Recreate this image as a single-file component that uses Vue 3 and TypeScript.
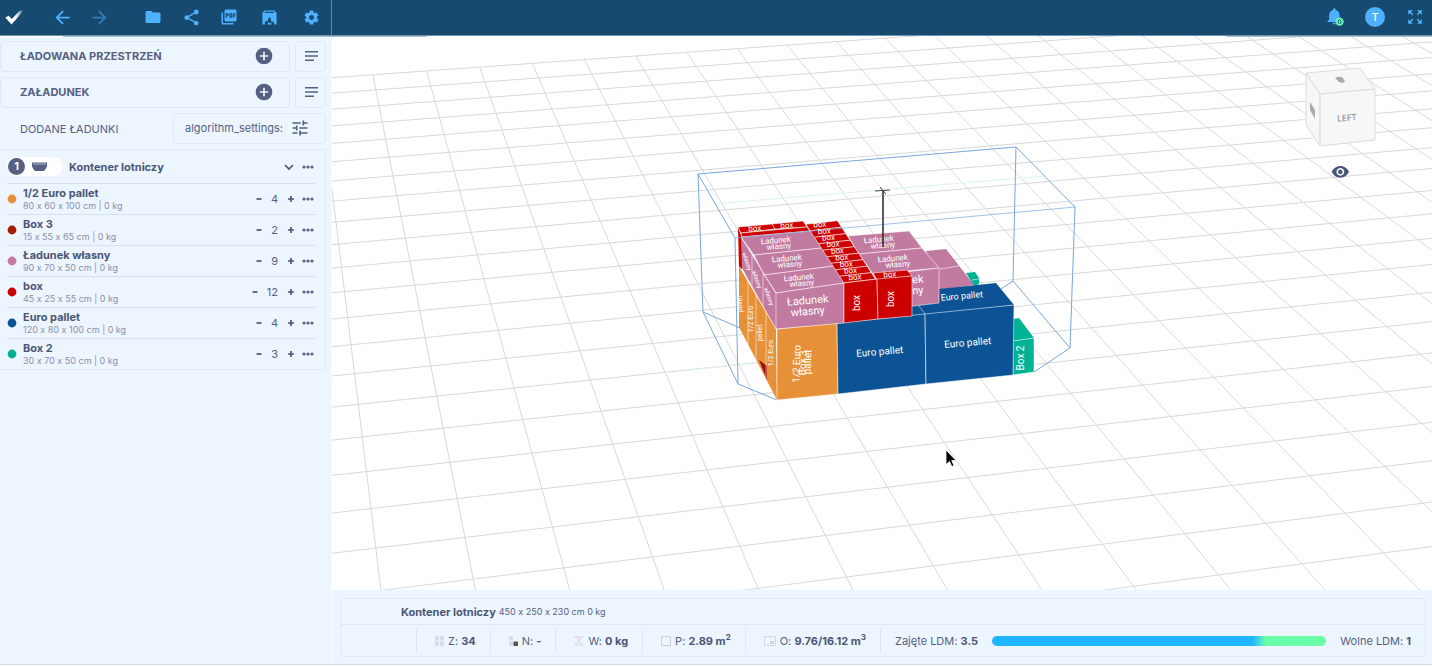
<script setup lang="ts">
interface Cargo {
  name: string
  size: string
  count: number
  color: string
}

interface Face {
  points: string
  fill: string
  edge?: boolean
}

interface Label {
  text: string
  x: number
  y: number
  angle: number
  size: number
}

interface Segment {
  x1: number
  y1: number
  x2: number
  y2: number
}

const cargo: Cargo[] = [
  { name: '1/2 Euro pallet', size: '80 x 60 x 100 cm | 0 kg', count: 4, color: '#e69138' },
  { name: 'Box 3', size: '15 x 55 x 65 cm | 0 kg', count: 2, color: '#a61c00' },
  { name: 'Ładunek własny', size: '90 x 70 x 50 cm | 0 kg', count: 9, color: '#c27ba0' },
  { name: 'box', size: '45 x 25 x 55 cm | 0 kg', count: 12, color: '#cc0000' },
  { name: 'Euro pallet', size: '120 x 80 x 100 cm | 0 kg', count: 4, color: '#0b5394' },
  { name: 'Box 2', size: '30 x 70 x 50 cm | 0 kg', count: 3, color: '#00b294' },
]

// Floor grid in perspective: both line families meet on a common horizon.
const horizon = -638
const vanishX = 231
const farX = 10334
const left = 332
const right = 1432
const bottom = 592

const rowY = (j: number, x: number): number => {
  const depth = 1 / (0.00139723 - 0.000029358 * j)
  return horizon + (depth * (farX - x)) / (farX - left)
}

const rows: Segment[] = Array.from({ length: 24 }, (_, j) => ({
  x1: left,
  y1: rowY(j, left),
  x2: right,
  y2: rowY(j, right),
}))

const columns: Segment[] = Array.from({ length: 22 }, (_, i) => {
  const slope = 0.199 + 0.07689 * (i - 1)
  const backSlope = (rowY(0, right) - rowY(0, left)) / (right - left)
  const back0 = rowY(0, left) - backSlope * left
  const y1 = (back0 + backSlope * (vanishX - slope * horizon)) / (1 - backSlope * slope)
  return {
    x1: vanishX + slope * (y1 - horizon),
    y1,
    x2: vanishX + slope * (bottom - horizon),
    y2: bottom,
  }
})

const orange = '#e69138'
const pink = '#c27ba0'
const red = '#cc0000'
const blue = '#0b5394'
const green = '#00b294'

const redColumn: Face[] = Array.from({ length: 9 }, (_, i) => {
  const lx = 806 + 4.2 * i
  const ly = 224.3 + 6.5 * i
  const rx = 837.3 + 4.25 * i
  const ry = 220.7 + 6.5 * i
  return {
    points: `${lx},${ly} ${rx},${ry} ${rx + 4.25},${ry + 6.5} ${lx + 4.2},${ly + 6.5}`,
    fill: red,
    edge: true,
  }
})

const faces: Face[] = [
  { points: '966,273 975,272 979,278 979,284 974,286', fill: green },
  { points: '926,251 946,249 974,285 938,290', fill: pink },
  { points: '848,236 909,231 922,248 859,254', fill: pink, edge: true },
  { points: '859,254 922,248 939,268 873,274', fill: pink, edge: true },
  { points: '905,306 939,302 939,289 996,283 1014,305 925,315 905,317', fill: blue },
  { points: '905,272 939,268 939,303 905,307', fill: pink, edge: true },
  { points: '1013,319 1019,318 1034,338 1013,341', fill: green },
  { points: '1013,341 1034,338 1034,372 1013,375', fill: green, edge: true },
  { points: '739,266 776,329 777,400 739,327', fill: orange },
  { points: '777,329 837,323 838,394 777,400', fill: orange, edge: true },
  { points: '837,323 925,314 926,384 838,394', fill: blue, edge: true },
  { points: '925,314 1014,305 1013,375 926,384', fill: blue, edge: true },
  { points: '738,227 742,238 742,269 739,267', fill: red },
  { points: '738,227 772,224 775,229 741,233', fill: red, edge: true },
  { points: '772,224 803,221 807,227 775,229', fill: red, edge: true },
  { points: '741,233 807,227 810,231 742,237', fill: red, edge: true },
  { points: '741,237 776,293 776,329 742,268', fill: pink },
  { points: '741,237 811,231 822,248 754,255', fill: pink, edge: true },
  { points: '754,255 822,248 834,266 764,275', fill: pink, edge: true },
  { points: '764,275 834,266 845,283 776,293', fill: pink, edge: true },
  { points: '776,293 844,283 844,323 776,329', fill: pink, edge: true },
  ...redColumn,
  { points: '873,273 907,270 912,276 877,280', fill: red, edge: true },
  { points: '844,283 877,279 878,319 844,323', fill: red, edge: true },
  { points: '877,279 912,276 912,316 878,319', fill: red, edge: true },
]

const seams: Segment[] = [
  { x1: 748, y1: 281, x2: 748, y2: 345 },
  { x1: 756, y1: 295, x2: 756, y2: 361 },
  { x1: 766, y1: 311, x2: 766, y2: 378 },
  { x1: 752, y1: 255, x2: 752, y2: 287 },
  { x1: 763, y1: 273, x2: 763, y2: 306 },
  { x1: 741, y1: 237, x2: 776, y2: 293 },
  { x1: 739, y1: 266, x2: 776, y2: 329 },
  { x1: 940, y1: 269, x2: 959, y2: 266 },
  { x1: 919, y1: 306, x2: 925, y2: 314 },
  { x1: 972, y1: 280, x2: 979, y2: 279 },
]

const labels: Label[] = [
  { text: 'Ładunek', x: 808, y: 304, angle: -5, size: 11 },
  { text: 'własny', x: 808, y: 315, angle: -5, size: 11 },
  { text: 'Euro pallet', x: 880, y: 355, angle: -5, size: 10 },
  { text: 'Euro pallet', x: 968, y: 346, angle: -5, size: 10 },
  { text: '1/2 Euro', x: 800, y: 364, angle: -88, size: 10 },
  { text: 'Box 3', x: 806, y: 363, angle: -88, size: 10 },
  { text: 'pallet', x: 811, y: 362, angle: -88, size: 10 },
  { text: 'box', x: 860, y: 303, angle: -90, size: 10 },
  { text: 'box', x: 894, y: 299, angle: -90, size: 10 },
  { text: 'Box 2', x: 1024, y: 358, angle: -90, size: 10 },
  { text: 'ek', x: 918, y: 283, angle: -5, size: 11 },
  { text: 'ny', x: 918, y: 294, angle: -5, size: 11 },
  { text: 'Euro pallet', x: 962, y: 299, angle: -5, size: 9 },
  { text: 'box', x: 755, y: 231, angle: -5, size: 8 },
  { text: 'box', x: 787, y: 228, angle: -5, size: 8 },
  { text: 'box', x: 890, y: 277, angle: -5, size: 8 },
  { text: 'Ładunek', x: 776, y: 243, angle: -5, size: 8 },
  { text: 'własny', x: 779, y: 249, angle: -5, size: 8 },
  { text: 'Ładunek', x: 787, y: 261, angle: -5, size: 8 },
  { text: 'własny', x: 790, y: 267, angle: -5, size: 8 },
  { text: 'Ładunek', x: 799, y: 280, angle: -5, size: 8 },
  { text: 'własny', x: 802, y: 286, angle: -5, size: 8 },
  { text: 'Ładunek', x: 879, y: 242, angle: -5, size: 8 },
  { text: 'własny', x: 883, y: 248, angle: -5, size: 8 },
  { text: 'Ładunek', x: 893, y: 261, angle: -5, size: 8 },
  { text: 'własny', x: 898, y: 267, angle: -5, size: 8 },
  { text: 'pallet', x: 742, y: 304, angle: -90, size: 7 },
  { text: '1/2 Euro', x: 753, y: 319, angle: -90, size: 7 },
  { text: 'pallet', x: 762, y: 333, angle: -90, size: 7 },
  { text: '1/2 Euro', x: 773, y: 353, angle: -90, size: 7 },
  { text: 'własny', x: 745, y: 262, angle: 72, size: 6 },
  { text: 'własny', x: 755, y: 280, angle: 72, size: 6 },
  { text: 'własny', x: 767, y: 297, angle: 72, size: 6 },
  ...Array.from({ length: 9 }, (_, i) => ({
    text: 'box',
    x: 820 + 4.4 * i,
    y: 227 + 6.6 * i,
    angle: -5,
    size: 8,
  })),
]
</script>

<template>
  <div class="page">
    <header class="topbar">
      <div class="tools">
        <svg class="logo" viewBox="0 0 24 24" width="20" height="20">
          <defs>
            <linearGradient id="tick" x1="0" x2="1">
              <stop offset="0.6" stop-color="#fff" />
              <stop offset="1" stop-color="#fff" stop-opacity="0.2" />
            </linearGradient>
          </defs>
          <path d="M1.500 12.500l4-2 4 4L18 5l4.500-1-1 3-12.500 14z" fill="url(#tick)" />
        </svg>
        <div class="group history">
          <button type="button" aria-label="Cofnij">
            <svg viewBox="0 0 24 24" width="21" height="21"><path d="M20 11H7.830l5.590-5.590L12 4l-8 8 8 8 1.410-1.410L7.830 13H20v-2z" /></svg>
          </button>
          <button type="button" class="dim" aria-label="Ponów">
            <svg viewBox="0 0 24 24" width="21" height="21"><path d="M12 4l-1.410 1.410L16.170 11H4v2h12.170l-5.580 5.590L12 20l8-8z" /></svg>
          </button>
        </div>
        <div class="group files">
          <button type="button" aria-label="Otwórz">
            <svg viewBox="0 0 24 24" width="18" height="18"><path d="M10 4H4c-1.100 0-2 .9-2 2v12c0 1.100.9 2 2 2h16c1.100 0 2-.9 2-2V8c0-1.100-.9-2-2-2h-8l-2-2z" /></svg>
          </button>
          <button type="button" aria-label="Udostępnij">
            <svg viewBox="0 0 24 24" width="19" height="19"><path d="M18 16.080c-.76 0-1.440.3-1.960.77L8.910 12.700c.05-.23.09-.46.09-.7s-.04-.47-.09-.7l7.050-4.110c.54.5 1.250.81 2.040.81 1.660 0 3-1.340 3-3s-1.340-3-3-3-3 1.340-3 3c0 .24.04.47.09.7L8.040 9.810C7.500 9.310 6.790 9 6 9c-1.660 0-3 1.340-3 3s1.340 3 3 3c.79 0 1.500-.31 2.040-.81l7.120 4.160c-.05.21-.08.43-.08.65 0 1.610 1.310 2.920 2.920 2.920s2.920-1.310 2.920-2.920-1.310-2.920-2.920-2.920z" /></svg>
          </button>
          <button type="button" aria-label="PDF">
            <svg viewBox="0 0 24 24" width="18" height="18"><path d="M20 2H8c-1.100 0-2 .9-2 2v12c0 1.100.9 2 2 2h12c1.100 0 2-.9 2-2V4c0-1.100-.9-2-2-2zm-8.500 7.500c0 .83-.67 1.500-1.500 1.500H9v2H7.500V7H10c.83 0 1.500.67 1.500 1.500v1zm5 2c0 .83-.67 1.500-1.500 1.500h-2.500V7H15c.83 0 1.500.67 1.500 1.500v3zm4-3H19v1h1.500V11H19v2h-1.500V7h3v1.500zM9 9.500h1v-1H9v1zM4 6H2v14c0 1.100.9 2 2 2h14v-2H4V6zm10 5.500h1v-3h-1v3z" /></svg>
          </button>
        </div>
        <div class="group extras">
          <button type="button" aria-label="Obraz">
            <svg viewBox="0 0 24 24" width="17" height="17">
              <path fill-rule="evenodd" d="M5 2h14l3 3.500V22H2V5.500zM5.500 4v1.500h13V4zM5.500 22h13v-3l-2-1.500-1.500 1-2-6.500h-2l-2 5.500-2-1-1.500 2z" />
              <path d="M8.500 22l2.500-3.500 1.500 1.500 1.500-1 1.500 3z" />
            </svg>
          </button>
          <button type="button" aria-label="Ustawienia">
            <svg viewBox="0 0 24 24" width="17" height="17"><path d="M19.430 12.980c.04-.32.07-.64.07-.98s-.03-.66-.07-.98l2.110-1.650c.19-.15.24-.42.12-.64l-2-3.460c-.12-.22-.39-.3-.61-.22l-2.490 1c-.52-.4-1.080-.73-1.690-.98l-.38-2.650C14.460 2.180 14.250 2 14 2h-4c-.25 0-.46.18-.49.42l-.38 2.650c-.61.25-1.170.59-1.690.98l-2.490-1c-.23-.09-.49 0-.61.22l-2 3.460c-.13.22-.07.49.12.64l2.110 1.650c-.04.32-.07.65-.07.98s.03.66.07.98l-2.110 1.650c-.19.15-.24.42-.12.64l2 3.460c.12.22.39.3.61.22l2.490-1c.52.4 1.080.73 1.690.98l.38 2.650c.03.24.24.42.49.42h4c.25 0 .46-.18.49-.42l.38-2.650c.61-.25 1.170-.59 1.690-.98l2.490 1c.23.09.49 0 .61-.22l2-3.460c.12-.22.07-.49-.12-.64l-2.110-1.650zM12 15.500c-1.930 0-3.500-1.570-3.500-3.500s1.570-3.500 3.500-3.500 3.500 1.570 3.500 3.500-1.570 3.500-3.500 3.500z" /></svg>
          </button>
        </div>
      </div>
      <div class="account">
        <button type="button" aria-label="Powiadomienia">
          <svg viewBox="0 0 24 24" width="20" height="20">
            <path d="M11 21c1 0 2-1 2-2H9c0 1 1 2 2 2zm6.500-6V10c0-3.100-1.700-5.600-4.800-6.300V3c0-.8-.7-1.500-1.500-1.500S9.700 2.200 9.700 3v.7C6.600 4.400 5 6.900 5 10v5l-2 2v1h16.500v-1z" />
            <circle cx="17.500" cy="17.500" r="5" fill="#69f0ae" />
            <ellipse cx="17.500" cy="17.500" rx="1.600" ry="2.300" fill="none" stroke="#174a70" stroke-width="1" />
          </svg>
        </button>
        <button type="button" class="avatar">T</button>
        <button type="button" aria-label="Pełny ekran">
          <svg viewBox="0 0 24 24" width="18" height="18"><path d="M15 3l2.300 2.300-2.890 2.870 1.420 1.420L18.700 6.700 21 9V3zM3 9l2.300-2.300 2.870 2.890 1.420-1.420L6.700 5.300 9 3H3zm6 12l-2.300-2.300 2.890-2.870-1.420-1.420L5.300 17.300 3 15v6zm12-6l-2.300 2.300-2.870-2.890-1.420 1.420 2.890 2.870L15 21h6z" /></svg>
        </button>
      </div>
    </header>

    <div class="body">
      <aside class="sidebar">
        <div class="section">
          <button type="button" class="card wide">
            <span>ŁADOWANA PRZESTRZEŃ</span>
            <svg viewBox="0 0 24 24" width="20" height="20"><path d="M12 2a10 10 0 100 20 10 10 0 000-20zm5 11h-4v4h-2v-4H7v-2h4V7h2v4h4z" /></svg>
          </button>
          <button type="button" class="card square" aria-label="Lista przestrzeni">
            <svg viewBox="0 0 14 12" width="14" height="12"><path d="M1 1h13v1.500H1zM1 5.300h13v1.500H1zM1 9.500h9V11H1z" /></svg>
          </button>
        </div>
        <div class="section">
          <button type="button" class="card wide">
            <span>ZAŁADUNEK</span>
            <svg viewBox="0 0 24 24" width="20" height="20"><path d="M12 2a10 10 0 100 20 10 10 0 000-20zm5 11h-4v4h-2v-4H7v-2h4V7h2v4h4z" /></svg>
          </button>
          <button type="button" class="card square" aria-label="Lista ładunków">
            <svg viewBox="0 0 14 12" width="14" height="12"><path d="M1 1h13v1.500H1zM1 5.300h13v1.500H1zM1 9.500h9V11H1z" /></svg>
          </button>
        </div>
        <div class="section added">
          <h2>DODANE ŁADUNKI</h2>
          <button type="button" class="card algorithm">
            <span>algorithm_settings:</span>
            <svg viewBox="0 0 24 24" width="20" height="20"><path d="M3 17v2h6v-2H3zM3 5v2h10V5H3zm10 16v-2h8v-2h-8v-2h-2v6h2zM7 9v2H3v2h4v2h2V9H7zm14 4v-2H11v2h10zm-6-4h2V7h4V5h-4V3h-2v6z" /></svg>
          </button>
        </div>

        <section class="manifest">
          <div class="manifest-head">
            <span class="pill">
              <span class="number">1</span>
              <svg viewBox="0 0 15 10" width="15" height="10"><path d="M0 .5h15v4L13 8q-.5 1-2 1H4Q2.500 9 2 8L0 4.500z" /><path d="M1 2h13" stroke="#a9b5c9" stroke-width="1" /></svg>
            </span>
            <strong>Kontener lotniczy</strong>
            <button type="button" aria-label="Zwiń">
              <svg viewBox="0 0 10 8" width="10" height="8"><path d="M1 2l4 4 4-4" class="stroke" /></svg>
            </button>
            <button type="button" aria-label="Więcej">
              <svg viewBox="0 0 12 4" width="12" height="4"><circle cx="2" cy="2" r="1.600" /><circle cx="6" cy="2" r="1.600" /><circle cx="10" cy="2" r="1.600" /></svg>
            </button>
          </div>
          <ul>
            <li v-for="item in cargo" :key="item.name">
              <svg viewBox="0 0 10 10" width="10" height="10"><circle cx="5" cy="5" r="4.400" :fill="item.color" /></svg>
              <div class="details">
                <strong>{{ item.name }}</strong>
                <small>{{ item.size }}</small>
              </div>
              <div class="stepper">
                <button type="button" aria-label="Mniej">
                  <svg viewBox="0 0 6 8" width="6" height="8"><path d="M0.500 4h5" class="stroke" /></svg>
                </button>
                <span>{{ item.count }}</span>
                <button type="button" aria-label="Dodaj">
                  <svg viewBox="0 0 8 8" width="8" height="8"><path d="M1 4h6M4 1v6" class="stroke" /></svg>
                </button>
                <button type="button" aria-label="Więcej">
                  <svg viewBox="0 0 12 4" width="12" height="4"><circle cx="2" cy="2" r="1.600" /><circle cx="6" cy="2" r="1.600" /><circle cx="10" cy="2" r="1.600" /></svg>
                </button>
              </div>
            </li>
          </ul>
        </section>
      </aside>

      <main class="workspace">
        <svg class="scene" viewBox="332 36 1100 554" preserveAspectRatio="xMidYMid slice">
          <g class="grid">
            <line v-for="(l, i) in rows" :key="`r${i}`" v-bind="l" />
            <line v-for="(l, i) in columns" :key="`c${i}`" v-bind="l" />
          </g>
          <path d="M713 204L1045 176M682 371L753 363" stroke="#dcf7e0" />
          <path d="M860 162L908 222" stroke="#f5dde0" />
          <path class="wire" d="M698 174L1016 147L1075 207M698 174L703 312L738 384L777 400M703 312L740 328M1016 147L1013 281L1070 348L1075 207M1013 281L1001 289M1070 348L1034 372M698 174L735 238L738 384" />
          <polygon v-for="(f, i) in faces" :key="`f${i}`" :points="f.points" :fill="f.fill" :class="{ edge: f.edge }" />
          <path d="M759 360l8 6v14z" fill="#991100" />
          <line v-for="(l, i) in seams" :key="`s${i}`" v-bind="l" class="seam" />
          <path class="wire front" d="M735 238L1075 207" />
          <text
            v-for="(l, i) in labels"
            :key="`t${i}`"
            class="face-label"
            :font-size="l.size"
            :transform="`translate(${l.x} ${l.y}) rotate(${l.angle})`"
          >{{ l.text }}</text>
          <path d="M883 190V247" stroke="#333" stroke-width="1.600" />
          <path d="M875 191L890 190M880 187L886 194" stroke="#444" />
          <g class="cube">
            <polygon points="1306,73 1360,68 1375,89 1320,94" />
            <polygon points="1306,73 1320,94 1320,146 1306,125" />
            <polygon points="1320,94 1375,89 1375,140 1320,146" />
            <path d="M1335 78q4-2 7-1l3 4-2 2-4-1zM1310 102l5 8v9l-5-9z" class="smudge" />
            <text transform="translate(1347 121) rotate(-5)">LEFT</text>
          </g>
          <g transform="translate(1331 162.500) scale(0.780)">
            <path fill="#495678" d="M12 4.500C7 4.500 2.730 7.610 1 12c1.730 4.390 6 7.500 11 7.500s9.270-3.110 11-7.500c-1.730-4.390-6-7.500-11-7.500zM12 17c-2.760 0-5-2.240-5-5s2.240-5 5-5 5 2.240 5 5-2.240 5-5 5zm0-8c-1.660 0-3 1.340-3 3s1.340 3 3 3 3-1.340 3-3-1.340-3-3-3z" />
          </g>
          <path d="M946 450V464.500L949.500 461.500L951.800 466.500L954 465.500L951.700 460.500H956z" fill="#000" stroke="#fff" stroke-width="0.800" />
        </svg>

        <footer class="summary">
          <div class="summary-card">
            <div class="summary-title"><strong>Kontener lotniczy</strong><span>450 x 250 x 230 cm 0 kg</span></div>
            <div class="stats">
              <div class="stat">
                <svg viewBox="0 0 9 10" width="9" height="10"><path fill="#d8dce4" d="M0 0h4v4.500H0zM5 0h4v4.500H5zM0 5.500h4V10H0zM5 5.500h4V10H5z" /></svg>
                <span>Z: <b>34</b></span>
              </div>
              <div class="stat">
                <svg viewBox="0 0 9 10" width="9" height="10"><path fill="#d8dce4" d="M0 0h4v4.500H0zM0 5.500h4V10H0z" /><path fill="#555" d="M4.500 5.500H9V10H4.500z" /></svg>
                <span>N: <b>-</b></span>
              </div>
              <div class="stat">
                <svg viewBox="0 0 10 10" width="10" height="10"><path fill="none" stroke="#d3d8e0" d="M0 1h10M2 1l3 3 3-3M5 4L1 9h8L5 4M4 7h2" /></svg>
                <span>W: <b>0 kg</b></span>
              </div>
              <div class="stat">
                <svg viewBox="0 0 10 10" width="10" height="10"><path fill="none" stroke="#cdd2db" d="M.5.5h9v9h-9z" /></svg>
                <span>P: <b>2.89 m<sup>2</sup></b></span>
              </div>
              <div class="stat">
                <svg viewBox="0 0 12 10" width="12" height="10"><path fill="none" stroke="#d3d8e0" d="M.5.5h11v9H.5z" /><path fill="#cdd2db" d="M6 5h4v3H6z" /></svg>
                <span>O: <b>9.76/16.12 m<sup>3</sup></b></span>
              </div>
              <div class="stat ldm">
                <span>Zajęte LDM: <b>3.5</b></span>
                <div class="bar"></div>
                <span>Wolne LDM: <b>1</b></span>
              </div>
            </div>
          </div>
        </footer>
      </main>
    </div>
  </div>
</template>

<style>
body {
  margin: 0;
  background: #fff;
}
</style>

<style scoped>
.page {
  display: flex;
  flex-direction: column;
  box-sizing: border-box;
  height: 100vh;
  padding-bottom: 1px;
  font-family: Inter, "Open Sans", sans-serif;
  font-size: 11px;
  font-variant-ligatures: no-contextual;
  line-height: 14px;
  color: #566182;
}
button {
  display: flex;
  align-items: center;
  justify-content: center;
  padding: 0;
  border: 0;
  background: none;
  font: inherit;
  font-variant-ligatures: inherit;
  color: inherit;
  fill: currentColor;
}
svg {
  display: block;
  flex: none;
}
strong,
b {
  font-weight: 700;
  color: #4b5777;
}
.topbar {
  position: relative;
  display: flex;
  flex: none;
  justify-content: space-between;
  height: 35px;
  border-bottom: 1px solid #6f93ad;
  background: #174a70;
  color: #4db1ff;
}
.topbar::after {
  content: "";
  position: absolute;
  top: 36px;
  left: 0;
  right: 0;
  height: 1px;
  background: linear-gradient(90deg, #fff 63px, #a9bfd2 63px 427px, transparent 427px 1226px, #a9bfd2 1226px);
}
.tools {
  display: flex;
  align-items: center;
  box-sizing: border-box;
  width: 332px;
  padding: 0 8px 1px 4px;
  border-right: 1px solid #5d8aa9;
}
.tools button {
  width: 24px;
  height: 24px;
}
.dim {
  opacity: 0.5;
}
.group {
  display: flex;
}
.history {
  gap: 13px;
  margin-left: 26px;
}
.files {
  gap: 14px;
  margin-left: 30px;
}
.extras {
  gap: 18px;
  margin-left: 16px;
}
.account {
  display: flex;
  align-items: center;
  gap: 20px;
  padding: 0 7px 1px 0;
}
.account button {
  width: 20px;
  height: 20px;
}
.account .avatar {
  border-radius: 50%;
  background: #4db1ff;
  font-size: 11px;
  font-weight: 500;
  color: #fff;
}
.body {
  display: flex;
  flex: 1;
  min-height: 0;
  border-bottom: 1px solid #d3dae3;
}
.sidebar {
  box-sizing: border-box;
  width: 332px;
  flex: none;
  padding: 5px 5px 0 0;
  border-right: 1px solid #f6faff;
  background: #edf5ff;
}
.section {
  display: flex;
  gap: 5px;
  margin-bottom: 5px;
}
.card {
  box-sizing: border-box;
  height: 31px;
  padding-bottom: 1px;
  border: 1px solid #e0e8f3;
  border-radius: 4px;
}
.wide {
  flex: 1;
  justify-content: space-between;
  padding: 0 15px 1px 19px;
  font-weight: 700;
}
.square {
  width: 31px;
}
.added {
  align-items: center;
  justify-content: space-between;
  padding-left: 20px;
}
.added h2 {
  margin: 0;
  font-size: 11px;
  font-weight: 400;
}
.algorithm {
  gap: 7px;
  width: 153px;
  padding-right: 4px;
}
.manifest {
  padding: 0 9px 0 7px;
  border: 1px solid #e0e8f3;
  border-left: 0;
  border-radius: 0 4px 4px 0;
}
.manifest-head {
  display: flex;
  align-items: center;
  gap: 8px;
  height: 33px;
  padding-right: 2px;
}
.pill {
  display: flex;
  align-items: center;
  gap: 7px;
  width: 56px;
  height: 19px;
  border-radius: 10px;
  background: #fff;
  fill: #566182;
}
.number {
  width: 17px;
  height: 17px;
  margin-left: 1px;
  border-radius: 50%;
  background: #566182;
  font-weight: 700;
  line-height: 17px;
  text-align: center;
  color: #fff;
}
.manifest-head strong {
  flex: 1;
  margin-left: -2px;
}
ul {
  margin: 0;
  padding: 0;
  list-style: none;
}
li {
  display: flex;
  align-items: center;
  gap: 6px;
  box-sizing: border-box;
  height: 31px;
  padding-right: 2px;
  border-top: 1px solid #d8e1ed;
}
.details {
  display: flex;
  flex: 1;
  flex-direction: column;
}
.details small {
  font-size: 9px;
  line-height: 12px;
  color: #8b93a8;
}
.stepper {
  display: flex;
  align-items: center;
  gap: 9px;
}
.stepper button:last-child {
  margin-left: -2px;
}
.stroke {
  fill: none;
  stroke: #4b5777;
  stroke-width: 1.7;
}
.workspace {
  display: flex;
  flex: 1;
  flex-direction: column;
  min-width: 0;
}
.scene {
  flex: 1;
  width: 100%;
  min-height: 0;
}
.grid {
  stroke: #d9d9d9;
  stroke-width: 1;
}
.wire {
  fill: none;
  stroke: #77a6e0;
  stroke-width: 1;
}
.front {
  opacity: 0.7;
}
.edge,
.seam {
  stroke: #fff;
  stroke-opacity: 0.65;
  stroke-width: 0.8;
}
.face-label {
  font-family: Roboto, sans-serif;
  fill: #fff;
  text-anchor: middle;
}
.cube polygon {
  fill: #f7f7f7;
  stroke: #dcdcdc;
  stroke-width: 1;
}
.cube text {
  font-family: "Open Sans", sans-serif;
  font-size: 9px;
  font-weight: 600;
  fill: #999;
  text-anchor: middle;
}
.smudge {
  fill: #aaa;
}
.summary {
  flex: none;
  padding: 8px 6px 7px 8px;
  background: #edf5ff;
}
.summary-card {
  border: 1px solid #e0e8f3;
  border-radius: 4px;
}
.summary-title {
  display: flex;
  align-items: center;
  gap: 3px;
  height: 25px;
  padding-left: 60px;
  border-bottom: 1px solid #dde6f1;
}
.summary-title span {
  font-size: 9px;
}
.stats {
  display: flex;
  align-items: center;
  height: 31px;
  padding-left: 75px;
}
.stat {
  display: flex;
  align-items: center;
  gap: 4px;
  height: 24px;
  padding: 0 14px 0 18px;
  border-left: 1px solid #dde6f1;
  white-space: nowrap;
}
.stat sup {
  font-size: 8px;
  line-height: 0;
}
.ldm {
  flex: 1;
  gap: 14px;
  padding-left: 14px;
}
.bar {
  flex: 1;
  height: 10px;
  border-radius: 5px;
  background: linear-gradient(90deg, #1fb6ff 78%, #69ffa8 82%);
}
</style>
